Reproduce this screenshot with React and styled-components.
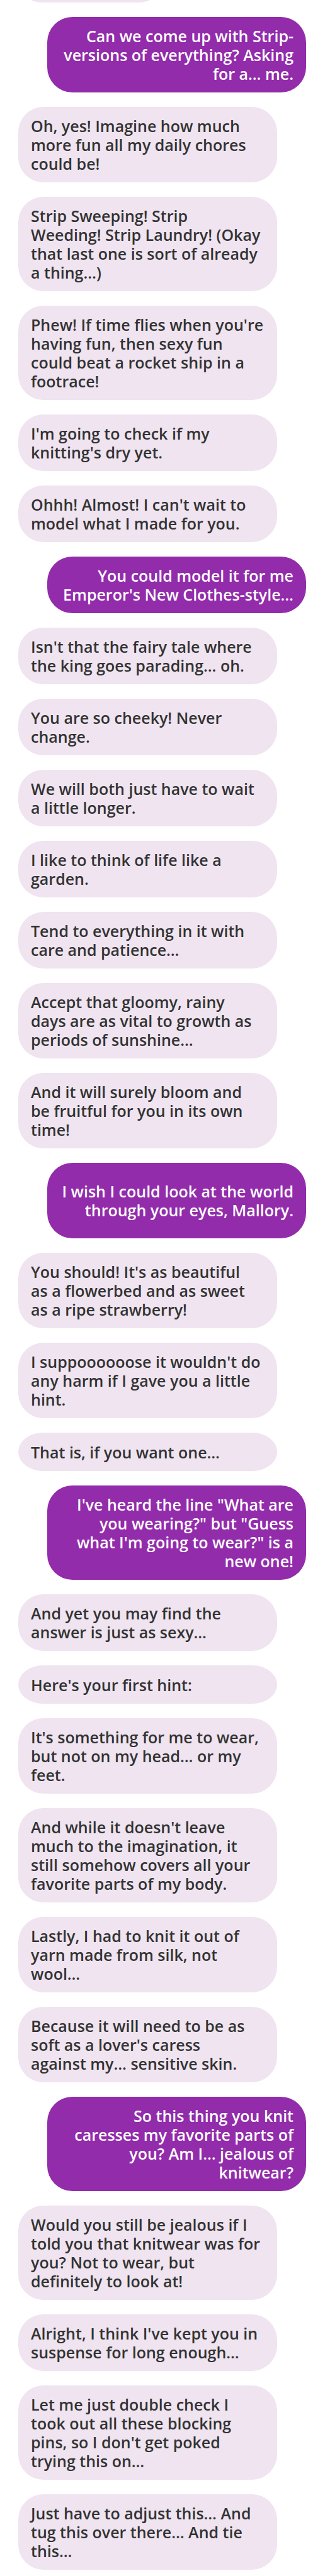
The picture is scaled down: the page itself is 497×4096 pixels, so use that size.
import React from "react";
import styled, { createGlobalStyle } from "styled-components";

const GlobalStyle = createGlobalStyle`
  *, *::before, *::after {
    box-sizing: border-box;
  }

  body {
    margin: 0;
    background: #ffffff;
    font-family: "Open Sans", "Noto Sans", sans-serif;
  }
`;

const Thread = styled.main`
  padding: 0 11px 10px 29px;
`;

/* The tail end of the message that has scrolled off the top. */
const ScrolledAway = styled.div`
  display: flex;
  align-items: flex-end;
  height: 4px;
  overflow: hidden;
`;

const ScrolledBubble = styled.div`
  flex: none;
  width: 50%;
  height: 61px;
  border-radius: 40px / 31px;
  background: #efe4f0;
`;

const MessageList = styled.ol`
  display: flex;
  flex-direction: column;
  gap: 23px;
  margin: 23px 0 0;
  padding: 0;
  list-style: none;
`;

const Message = styled.li`
  display: flex;
  justify-content: ${({ $sent }) => ($sent ? "flex-end" : "flex-start")};
`;

const Bubble = styled.div`
  display: flex;
  flex-direction: column;
  justify-content: center;
  width: 90%;
  min-height: ${({ $tall }) => ($tall ? "120px" : "61px")};
  padding: 15px 20px;
  border-radius: ${({ $single }) => ($single ? "40px / 31px" : "40px")};
  background: ${({ $sent }) => ($sent ? "#922cab" : "#efe4f0")};
  color: ${({ $sent }) => ($sent ? "#ffffff" : "#333333")};
  text-align: ${({ $sent }) => ($sent ? "right" : "left")};
`;

const Text = styled.p`
  margin: 0;
  font-size: 25px;
  font-weight: 600;
  line-height: 30px;
  white-space: pre;
`;

const me = (...lines) => ({ sent: true, lines });
const mallory = (...lines) => ({ sent: false, lines });

const messages = [
  me("Can we come up with Strip-", "versions of everything? Asking", "for a… me."),
  mallory("Oh, yes! Imagine how much", "more fun all my daily chores", "could be!"),
  mallory("Strip Sweeping! Strip", "Weeding! Strip Laundry! (Okay", "that last one is sort of already", "a thing…)"),
  mallory("Phew! If time flies when you're", "having fun, then sexy fun", "could beat a rocket ship in a", "footrace!"),
  mallory("I'm going to check if my", "knitting's dry yet."),
  mallory("Ohhh! Almost! I can't wait to", "model what I made for you."),
  me("You could model it for me", "Emperor's New Clothes-style…"),
  mallory("Isn't that the fairy tale where", "the king goes parading… oh."),
  mallory("You are so cheeky! Never", "change."),
  mallory("We will both just have to wait", "a little longer."),
  mallory("I like to think of life like a", "garden."),
  mallory("Tend to everything in it with", "care and patience…"),
  mallory("Accept that gloomy, rainy", "days are as vital to growth as", "periods of sunshine…"),
  mallory("And it will surely bloom and", "be fruitful for you in its own", "time!"),
  { ...me("I wish I could look at the world", "through your eyes, Mallory."), tall: true },
  mallory("You should! It's as beautiful", "as a flowerbed and as sweet", "as a ripe strawberry!"),
  mallory("I suppoooooose it wouldn't do", "any harm if I gave you a little", "hint."),
  mallory("That is, if you want one…"),
  me("I've heard the line \"What are", "you wearing?\" but \"Guess", "what I'm going to wear?\" is a", "new one!"),
  mallory("And yet you may find the", "answer is just as sexy…"),
  mallory("Here's your first hint:"),
  mallory("It's something for me to wear,", "but not on my head… or my", "feet."),
  mallory("And while it doesn't leave", "much to the imagination, it", "still somehow covers all your", "favorite parts of my body."),
  mallory("Lastly, I had to knit it out of", "yarn made from silk, not", "wool…"),
  mallory("Because it will need to be as", "soft as a lover's caress", "against my… sensitive skin."),
  me("So this thing you knit", "caresses my favorite parts of", "you? Am I… jealous of", "knitwear?"),
  mallory("Would you still be jealous if I", "told you that knitwear was for", "you? Not to wear, but", "definitely to look at!"),
  mallory("Alright, I think I've kept you in", "suspense for long enough…"),
  mallory("Let me just double check I", "took out all these blocking", "pins, so I don't get poked", "trying this on…"),
  mallory("Just have to adjust this… And", "tug this over there… And tie", "this…"),
];

export default function App() {
  return (
    <>
      <GlobalStyle />
      <Thread>
        <ScrolledAway>
          <ScrolledBubble />
        </ScrolledAway>
        <MessageList>
          {messages.map(({ sent, tall, lines }, index) => (
            <Message key={index} $sent={sent}>
              <Bubble $sent={sent} $tall={tall} $single={lines.length === 1}>
                <Text>{lines.join("\n")}</Text>
              </Bubble>
            </Message>
          ))}
        </MessageList>
      </Thread>
    </>
  );
}
